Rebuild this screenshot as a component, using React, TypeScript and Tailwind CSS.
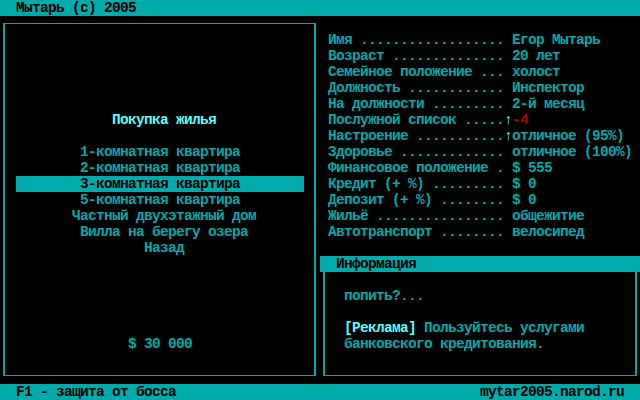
const stats: [string, string, string?][] = [
  ["Имя .................. ", "Егор Мытарь"],
  ["Возраст .............. ", "20 лет"],
  ["Семейное положение ... ", "холост"],
  ["Должность ............ ", "Инспектор"],
  ["На должности ......... ", "2-й месяц"],
  ["Послужной список .....", "-4", "red"],
  ["Настроение ...........", "отличное (95%)", "up"],
  ["Здоровье ............. ", "отличное (100%)"],
  ["Финансовое положение . ", "$ 555"],
  ["Кредит (+ %) ......... ", "$ 0"],
  ["Депозит (+ %) ........ ", "$ 0"],
  ["Жильё ................ ", "общежитие"],
  ["Автотранспорт ........ ", "велосипед"],
]

const menu = [
  { text: "1-комнатная квартира", pl: "pl-[75px]" },
  { text: "2-комнатная квартира", pl: "pl-[75px]" },
  { text: "3-комнатная квартира", pl: "pl-[64px]", active: true },
  { text: "5-комнатная квартира", pl: "pl-[75px]" },
  { text: "Частный двухэтажный дом", pl: "pl-[67px]" },
  { text: "Вилла на берегу озера", pl: "pl-[75px]" },
  { text: "Назад", pl: "pl-[139px]" },
]

export default function App() {
  return (
    <div className="w-[640px] h-[400px] bg-black flex flex-col font-['Liberation_Mono',monospace] font-bold text-[14.5px] tracking-[-0.7px] leading-4 text-[#00AAAA] whitespace-pre overflow-hidden">
      {/* top bar */}
      <div className="h-4 bg-[#00AAAA] text-black pl-4">Мытарь (c) 2005</div>

      <div className="flex h-[368px]">
        {/* left panel */}
        <div className="w-[320px] pt-[7px] pl-[3px]">
          <div className="w-[313px] h-[353px] border-x-2 border-y border-[#00AAAA]">
            <div className="h-4 mt-[88px] pl-[107px] text-[#55FFFF]">Покупка жилья</div>
            <div className="mt-4">
              {menu.map((m) =>
                m.active ? (
                  <div key={m.text} className={`h-4 ml-[11px] w-[288px] bg-[#00AAAA] text-black ${m.pl}`}>
                    {m.text}
                  </div>
                ) : (
                  <div key={m.text} className={`h-4 ${m.pl}`}>
                    {m.text}
                  </div>
                )
              )}
            </div>
            <div className="h-4 mt-[80px] pl-[123px]">$ 30 000</div>
          </div>
        </div>

        {/* right panel */}
        <div className="w-[320px] flex flex-col">
          <div className="pt-4 pl-2">
            {stats.map(([label, value, kind]) => (
              <div key={label} className="h-4">
                {label}
                {kind && <span className="text-[#55FFFF]">↑</span>}
                <span className={kind === "red" ? "text-[#AA0000]" : ""}>{value}</span>
              </div>
            ))}
          </div>
          <div className="mt-4 h-4 bg-[#00AAAA] text-black pl-4">Информация</div>
          <div className="ml-[3px] w-[314px] h-[104px] border-x-2 border-b border-[#00AAAA] pt-4 pl-[19px]">
            <div className="h-4">попить?...</div>
            <div className="h-4 mt-4">
              <span className="text-[#55FFFF]">[Реклама]</span> Пользуйтесь услугами
            </div>
            <div className="h-4">банковского кредитования.</div>
          </div>
        </div>
      </div>

      {/* bottom bar */}
      <div className="h-4 bg-[#00AAAA] text-black flex justify-between px-4">
        <span>F1 - защита от босса</span>
        <span>mytar2005.narod.ru</span>
      </div>
    </div>
  )
}
